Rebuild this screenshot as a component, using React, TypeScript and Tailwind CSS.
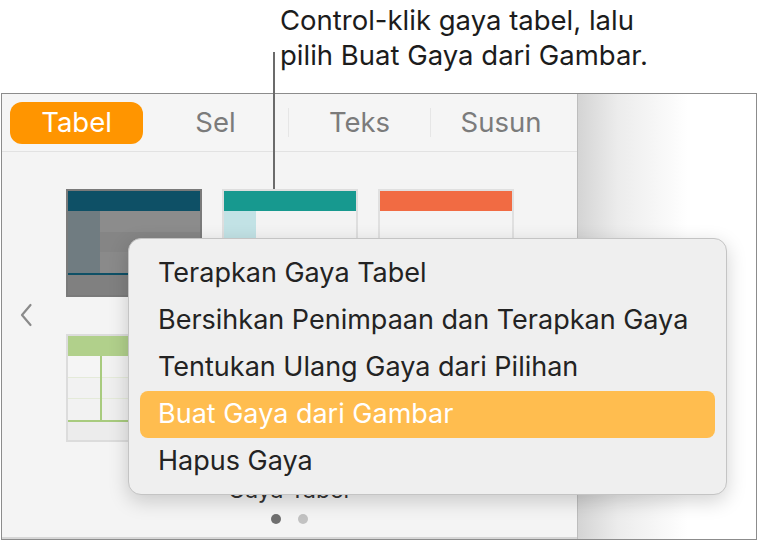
import React from "react";

const font = { fontFamily: "Inter, 'Noto Sans', sans-serif" };

function Thumb1() {
  return (
    <div className="w-[136px] h-[108px] border-2 border-[#7a7a7a] bg-[#838383] flex flex-col">
      <div className="h-[20px] bg-[#0e5066]" />
      <div className="flex flex-1">
        <div className="w-[32px] bg-[#707c81]" />
        <div className="flex-1 flex flex-col">
          <div className="flex-1 bg-[#8c8c8c]" />
          <div className="flex-1 bg-[#858585]" />
          <div className="flex-1 bg-[#8a8a8a]" />
        </div>
      </div>
      <div className="h-[2px] bg-[#0e5066]" />
      <div className="h-[20px] bg-[#808080]" />
    </div>
  );
}

function Thumb2() {
  return (
    <div className="w-[136px] h-[108px] border-2 border-[#dedede] bg-[#f2f2f2] flex flex-col">
      <div className="h-[20px] bg-[#17998f]" />
      <div className="flex flex-1">
        <div className="w-[32px] bg-[#c2e2e5]" />
        <div className="flex-1 bg-[#f3f3f3]" />
      </div>
    </div>
  );
}

function Thumb3() {
  return (
    <div className="w-[136px] h-[108px] border-2 border-[#e0e0e0] bg-[#f3f3f3] flex flex-col">
      <div className="h-[20px] bg-[#f16b43]" />
      <div className="flex-1 bg-[#f4f4f4]" />
    </div>
  );
}

function Thumb4() {
  return (
    <div className="w-[136px] h-[108px] border-2 border-[#dcdcdc] bg-[#efefef] flex flex-col">
      <div className="h-[20px] bg-[#b1d08b]" />
      <div className="flex flex-1">
        <div className="w-[32px] flex flex-col">
          <div className="flex-1 bg-[#f5f5f5] border-b border-[#e4ead9]" />
          <div className="flex-1 bg-[#f2f2f2] border-b border-[#e4ead9]" />
          <div className="flex-1 bg-[#f2f2f2]" />
        </div>
        <div className="w-[2px] bg-[#a8cb7e]" />
        <div className="flex-1 flex flex-col">
          <div className="flex-1 bg-[#f2f2f2] border-b border-[#e4ead9]" />
          <div className="flex-1 bg-[#efefef] border-b border-[#e4ead9]" />
          <div className="flex-1 bg-[#efefef]" />
        </div>
      </div>
      <div className="h-[2px] bg-[#a8cb7e]" />
      <div className="h-[18px] bg-[#ececec]" />
    </div>
  );
}

export default function App() {
  const items = [
    "Terapkan Gaya Tabel",
    "Bersihkan Penimpaan dan Terapkan Gaya",
    "Tentukan Ulang Gaya dari Pilihan",
    "Buat Gaya dari Gambar",
    "Hapus Gaya",
  ];
  return (
    <div className="relative w-[758px] h-[542px] bg-white overflow-hidden" style={font}>
      {/* callout */}
      <div className="h-[93px] pl-[280px] pt-[3px] text-[27.5px] leading-[35px] text-[#1c1c1c]">
        <div>Control-klik gaya tabel, lalu</div>
        <div>pilih Buat Gaya dari Gambar.</div>
      </div>

      {/* frame */}
      <div className="ml-[1px] w-[756px] h-[447px] border-[1.5px] border-[#8c8c8c] flex">
        <div className="w-[576px] h-full bg-[#f4f4f4] border-r border-[#bdbdbd] flex flex-col">
          {/* tabs */}
          <div className="h-[58px] border-b border-[#e2e2e2] bg-[#f5f5f5] flex items-center pl-[8px] text-[27.5px] text-[#7b7b7b]">
            <div className="w-[133px] h-[42px] rounded-[12px] bg-[#ff9500] text-white flex items-center justify-center">
              Tabel
            </div>
            <div className="w-[145px] flex justify-center">Sel</div>
            <div className="w-px h-[29px] bg-[#e6e6e6]" />
            <div className="w-[141px] flex justify-center">Teks</div>
            <div className="w-px h-[29px] bg-[#e6e6e6]" />
            <div className="flex-1 flex justify-center pr-[6px]">Susun</div>
          </div>
          {/* content */}
          <div className="flex-1 flex flex-col border-b-2 border-[#d6d6d6]">
            <div className="flex items-start">
              <div className="w-[64px] pl-[17px] pt-[151px]">
                <svg width="14" height="24" viewBox="0 0 14 24">
                  <path d="M11.5 2 L3 12 L11.5 22" fill="none" stroke="#8a8a8a" strokeWidth="2.2" strokeLinecap="round" strokeLinejoin="round" />
                </svg>
              </div>
              <div className="flex flex-col gap-[37px] pt-[37px]">
                <div className="flex gap-[20px]">
                  <Thumb1 />
                  <Thumb2 />
                  <Thumb3 />
                </div>
                <div className="flex gap-[20px]">
                  <Thumb4 />
                  <Thumb2 />
                  <Thumb3 />
                </div>
              </div>
            </div>
            <div className="pl-[226px] pt-[34px] text-[23px] leading-[28px] text-[#333]">Gaya Tabel</div>
            <div className="flex gap-[17px] pl-[269px] pt-[10px]">
              <div className="w-[10px] h-[10px] rounded-full bg-[#6f6f6f]" />
              <div className="w-[10px] h-[10px] rounded-full bg-[#c2c2c2]" />
            </div>
          </div>
        </div>
        <div className="flex-1 h-full bg-[linear-gradient(to_right,#d4d4d4,#ececec_40px,#ffffff_110px)]" />
      </div>

      {/* leader line */}
      <div className="absolute left-[273px] top-[52px] w-[1.5px] h-[137px] bg-[#6b6b6b]" />

      {/* context menu */}
      <div className="absolute left-[128px] top-[238px] w-[599px] h-[257px] rounded-[13px] bg-[#efefef] border border-[#c4c4c4] shadow-[0_6px_20px_rgba(0,0,0,0.18)] pt-[11px] px-[11px]">
        {items.map((t, i) => (
          <div
            key={t}
            className={
              "h-[47px] flex items-center pl-[18px] text-[27px] rounded-[8px] " +
              (i === 3 ? "bg-[#ffbd4f] text-white" : "text-[#232323]")
            }
          >
            {t}
          </div>
        ))}
      </div>
    </div>
  );
}
